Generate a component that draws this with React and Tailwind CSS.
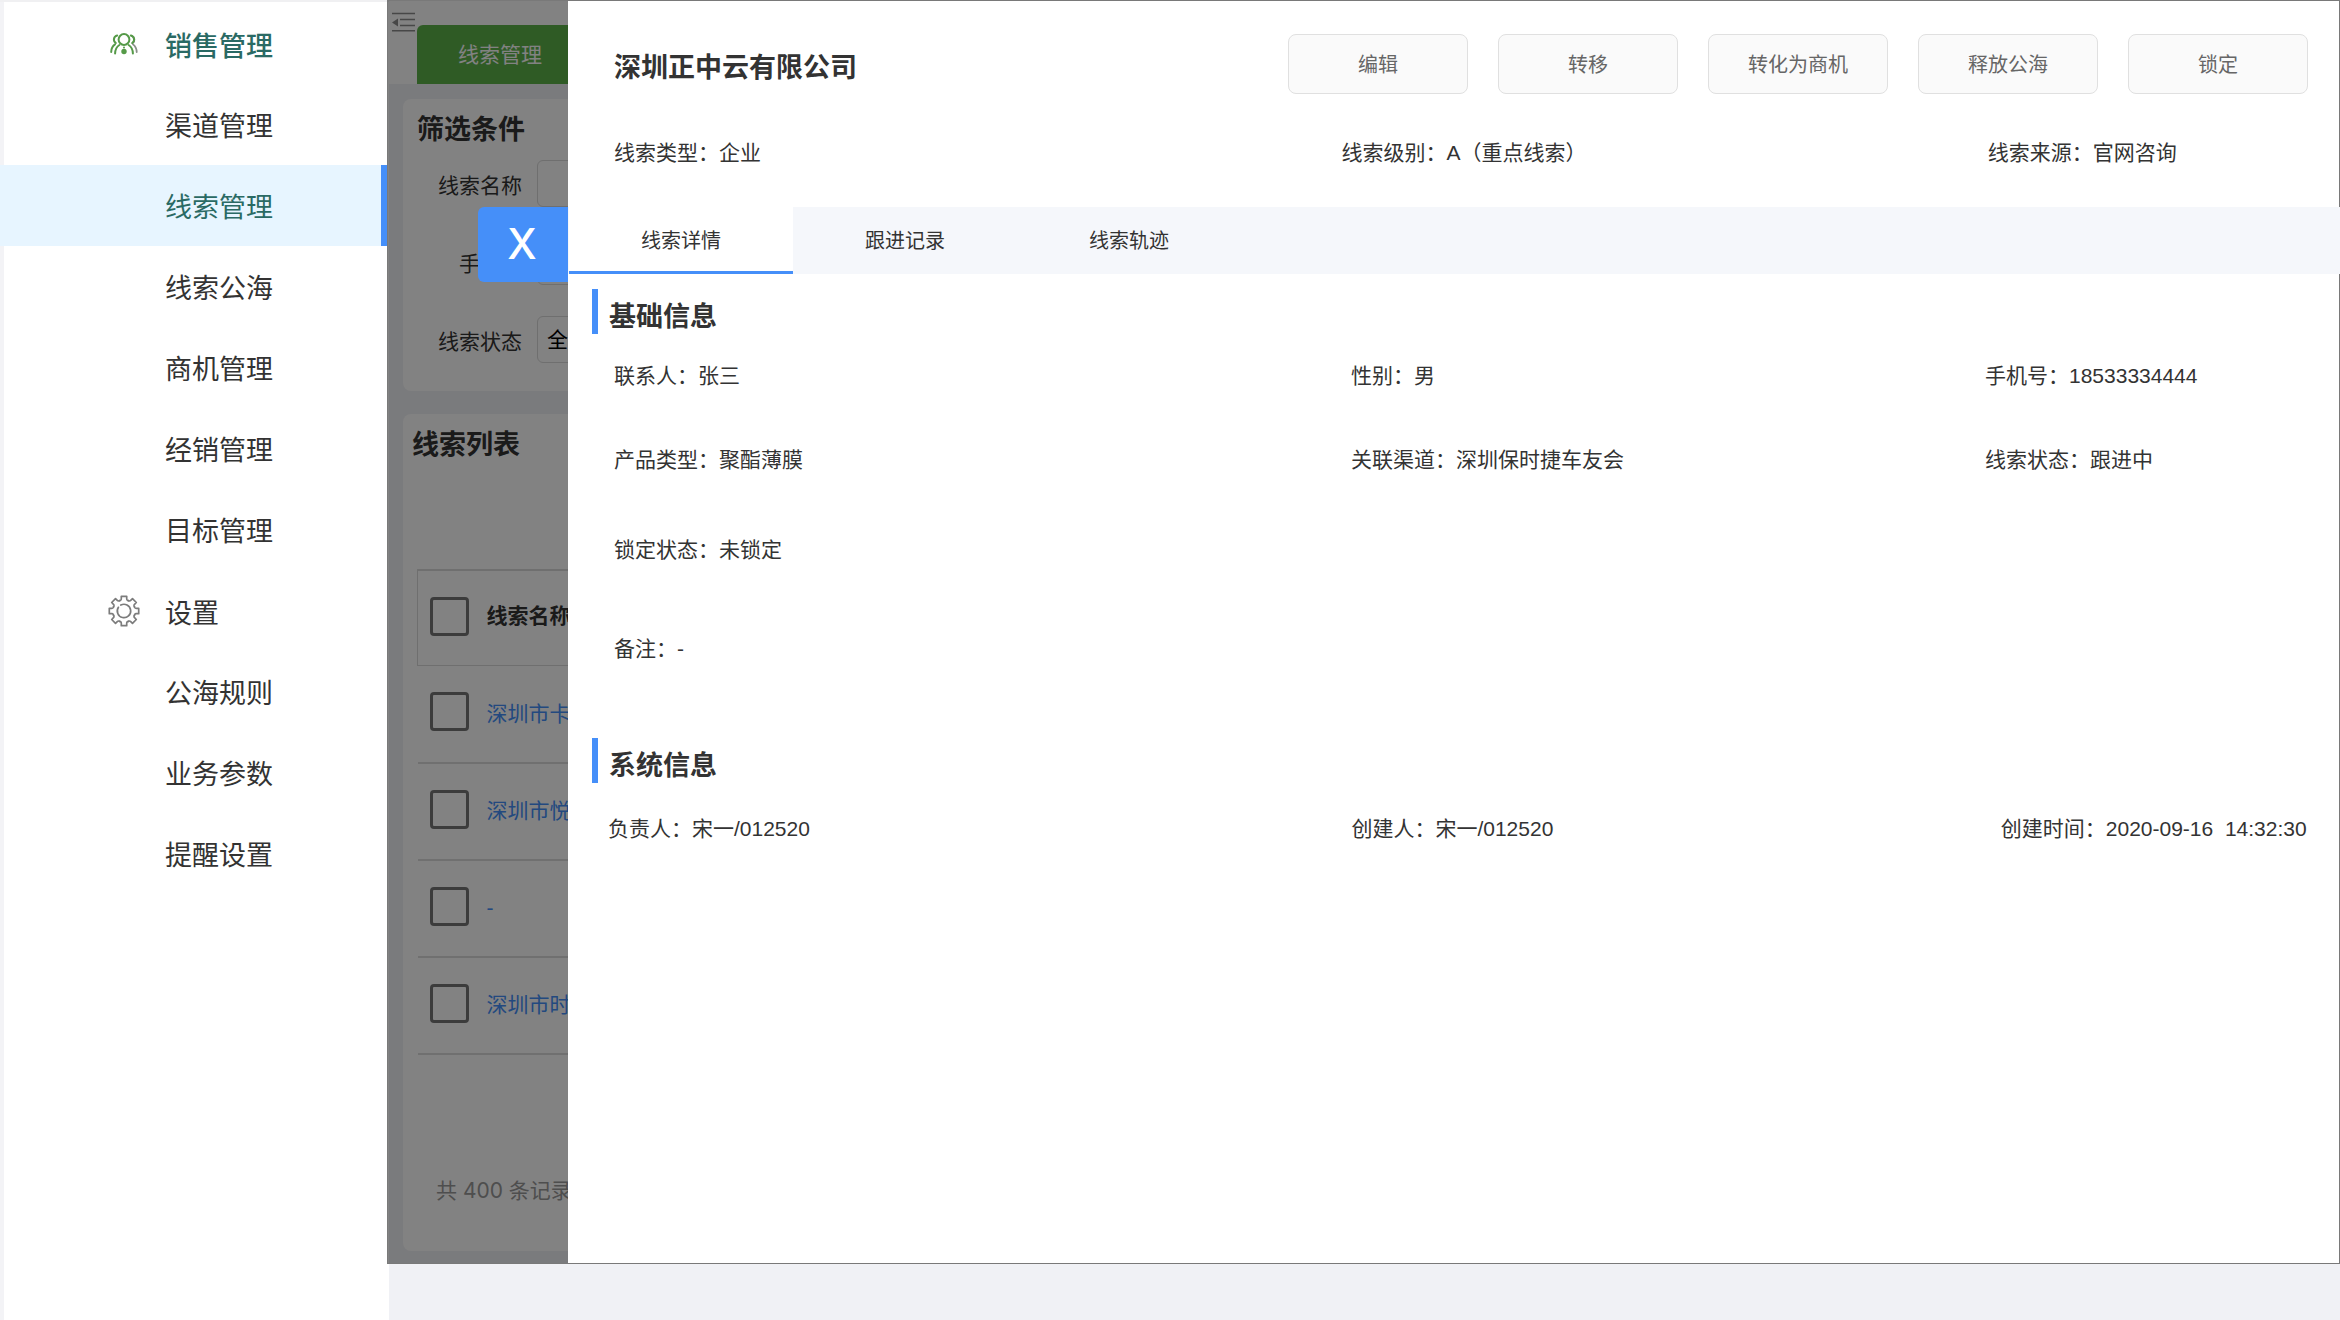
import { useState } from 'react';

const menuGroups = [
  {
    title: '销售管理',
    icon: 'team',
    items: ['渠道管理', '线索管理', '线索公海', '商机管理', '经销管理', '目标管理'],
  },
  {
    title: '设置',
    icon: 'gear',
    items: ['公海规则', '业务参数', '提醒设置'],
  },
];

const actions = ['编辑', '转移', '转化为商机', '释放公海', '锁定'];
const tabs = ['线索详情', '跟进记录', '线索轨迹'];
const leads = ['深圳市卡', '深圳市悦', '-', '深圳市时'];

function TeamIcon() {
  return (
    <svg className="w-7 h-6" viewBox="0 0 28 24" fill="none" strokeLinecap="round">
      <g stroke="#8a8f88" strokeWidth="1.8">
        <path d="M21.600 3.800a4.200 4.200 0 0 1 1 7.400" />
        <path d="M23 12.400c2.400 1.800 3.600 4.400 3.700 7.600" />
      </g>
      <g stroke="#559a48" strokeWidth="2">
        <circle cx="14" cy="7.500" r="5.400" />
        <path d="M7.200 3.400a4.200 4.200 0 0 0-1.400 7.600" />
        <path d="M20.800 3.400a4.200 4.200 0 0 1 1.400 7.600" />
        <path d="M5 12.400C2.500 14 1.300 16.800 1.200 20" />
        <path d="M9.400 13C6.600 14.800 5.200 17.600 5.100 21.500" />
        <path d="M18.600 13c2.800 1.800 4.200 4.600 4.300 8.500" />
      </g>
      <circle cx="14" cy="19.500" r="2.700" fill="#559a48" />
      <circle cx="14" cy="15.600" r="1" fill="#559a48" />
    </svg>
  );
}

function GearIcon() {
  const tooth = 'M11.700 5.600L12.600 5.200Q13.300 4.800 13.300 3.800V1.300H18.700V3.800Q18.700 4.800 19.400 5.200L20.300 5.600';
  return (
    <svg className="w-8 h-8" viewBox="0 0 32 32" fill="none" stroke="#7c7c7c" strokeWidth="1.7" strokeLinecap="round" strokeLinejoin="round">
      {[0, 45, 90, 135, 180, 225, 270, 315].map((deg) => (
        <path key={deg} d={tooth} transform={`rotate(${deg} 16 16)`} />
      ))}
      <path d="M10.400 12.300a6.700 6.700 0 1 0 2.400-2.200" />
    </svg>
  );
}

function CollapseIcon() {
  return (
    <svg className="w-[23px] h-5" viewBox="0 0 23 20" fill="none" stroke="#8c8c8c" strokeWidth="1.500">
      <path d="M0 1.500h23M8 7.500h15M8 13.500h15M0 18.700h23" />
      <path d="M0 10.500l6-4v8z" fill="#8c8c8c" stroke="none" />
    </svg>
  );
}

function Sidebar() {
  return (
    <aside className="w-[389px] pr-[2px] shrink-0 bg-white border-t-2 border-[#f0f0f2]">
      <nav className="border-l-4 border-[#f3f3f6] min-h-full pt-px text-[27px] text-[#333]">
        {menuGroups.map((group) => (
          <div key={group.title}>
            <div className="flex items-center h-[81px] pl-[104px] gap-[25px]">
              <span className="w-8 flex justify-center">
                {group.icon === 'team' ? <TeamIcon /> : <GearIcon />}
              </span>
              <span className={group.icon === 'team' ? 'pt-2 text-[#2a6a64] font-medium' : 'pt-2'}>
                {group.title}
              </span>
            </div>
            <ul>
              {group.items.map((item) => (
                <li key={item}>
                  <a
                    href="#"
                    className={
                      item === '线索管理'
                        ? 'flex items-center h-[81px] pt-[6px] -ml-1 pl-[165px] bg-[#e7f5ff] text-[#2a6a64] border-r-6 border-[#458ff9]'
                        : 'flex items-center h-[81px] pt-[6px] pl-[161px]'
                    }
                  >
                    {item}
                  </a>
                </li>
              ))}
            </ul>
          </div>
        ))}
      </nav>
    </aside>
  );
}

function LeadList() {
  return (
    <div className="text-[21px] text-[#333] pb-[13px]">
      <div className="flex items-end h-[84px] bg-white pl-[3px] gap-[2px]">
        <div className="self-start pt-3">
          <CollapseIcon />
        </div>
        <button className="h-[59px] px-[41px] bg-[#5cb24a] text-white rounded-tl-md rounded-tr-md">
          线索管理
        </button>
      </div>

      {/* Filters */}
      <form className="mt-[15px] ml-[14px] mr-4 h-[292px] bg-white rounded-lg pl-[14px] pt-[11px]">
        <h2 className="text-[27px] leading-10 font-bold mb-[10px]">筛选条件</h2>
        <div className="grid grid-cols-[105px_300px] gap-x-[15px] gap-y-[31px] items-center">
          <label htmlFor="name" className="text-right pt-1">线索名称</label>
          <input id="name" className="h-[47px] border border-[#d9d9d9] rounded-md px-[9px]" />
          <label htmlFor="phone" className="text-right pt-1">手机号</label>
          <input id="phone" className="h-[47px] border border-[#d9d9d9] rounded-md px-[9px]" />
          <label htmlFor="status" className="text-right pt-1">线索状态</label>
          <select id="status" className="h-[47px] border border-[#d9d9d9] rounded-md px-[9px] appearance-none text-black">
            <option>全部</option>
          </select>
        </div>
      </form>

      {/* Lead table */}
      <section className="mt-[23px] ml-[14px] mr-4 h-[837px] bg-white rounded-lg pt-[11px]">
        <h2 className="text-[27px] leading-10 font-bold pl-[9px]">线索列表</h2>
        <div className="mt-[104px] mx-[14px] border-t border-l border-[#d9d9d9] rounded-tl-md h-0" />
        <table className="w-[calc(100%-28px)] mx-[14px] border-collapse">
          <thead>
            <tr className="h-[95px] border border-[#d9d9d9]">
              <th className="w-[69px] pl-3 pb-1">
                <input type="checkbox" aria-label="全选" className="block size-[39px] appearance-none border-3 border-[#777] rounded" />
              </th>
              <th className="text-left font-bold pb-1">线索名称</th>
            </tr>
          </thead>
          <tbody>
            {leads.map((lead) => (
              <tr key={lead} className="h-[97px] border-b-2 border-[#dcdcdc]">
                <td className="pl-3 pb-1">
                  <input type="checkbox" aria-label={lead} className="block size-[39px] appearance-none border-3 border-[#777] rounded" />
                </td>
                <td>
                  <a href="#" className="text-[#458ff9]">{lead}</a>
                </td>
              </tr>
            ))}
          </tbody>
        </table>
        <p className="mt-[120px] pl-[33px] text-[#999] font-['Inter','Noto_Sans_CJK_SC',sans-serif]">
          共 400 条记录
        </p>
      </section>
    </div>
  );
}

function SectionTitle({ children }) {
  return (
    <div className="flex items-start pl-6 gap-[11px]">
      <span className="w-[6px] h-[45px] bg-[#458ff9]" />
      <h3 className="text-[27px] leading-[56px] font-bold">{children}</h3>
    </div>
  );
}

function LeadDrawer({ onClose }) {
  const [tab, setTab] = useState(tabs[0]);

  return (
    <div className="absolute inset-0 bg-black/49 border border-[#797979] pl-[180px]">
      <div className="relative h-full bg-white text-[21px] leading-[30px] text-[#333] whitespace-nowrap">
        <button
          onClick={onClose}
          className="absolute -left-[90px] top-[206px] w-[90px] h-[75px] pr-[2px] pb-[2px] bg-[#458ff9] text-white text-[42px] font-medium font-['Inter',sans-serif] rounded-l-md"
        >
          X
        </button>

        <header className="flex items-center pl-[46px] pr-[31px] pt-[33px]">
          <h1 className="flex-1 pt-2 text-[27px] font-bold">深圳正中云有限公司</h1>
          <div className="flex gap-[30px]">
            {actions.map((action) => (
              <button key={action} className="w-[180px] h-[60px] pt-[2px] bg-[#fafafa] border border-[#e0e0e0] rounded-lg text-xl text-[#666]">
                {action}
              </button>
            ))}
          </div>
        </header>

        <div className="grid grid-cols-[727fr_646fr_351fr] pl-[46px] pt-11">
          <p>线索类型：企业</p>
          <p>线索级别：A（重点线索）</p>
          <p>线索来源：官网咨询</p>
        </div>

        <div role="tablist" className="flex mt-[39px] -mr-px pl-px bg-[#f5f7fb]">
          {tabs.map((name) => (
            <button
              key={name}
              role="tab"
              aria-selected={tab === name}
              onClick={() => setTab(name)}
              className={
                tab === name
                  ? 'w-56 h-[67px] pt-1 text-xl bg-white border-b-3 border-[#458ff9]'
                  : 'w-56 h-[67px] pt-1 text-xl border-b-3 border-transparent'
              }
            >
              {name}
            </button>
          ))}
        </div>

        <section className="pt-[15px]">
          <SectionTitle>基础信息</SectionTitle>
          <div className="grid grid-cols-[737fr_634fr_354fr] grid-rows-[84px_90px_99px_60px] pl-[46px] pt-4">
            <p>联系人：张三</p>
            <p>性别：男</p>
            <p>手机号：18533334444</p>
            <p>产品类型：聚酯薄膜</p>
            <p>关联渠道：深圳保时捷车友会</p>
            <p>线索状态：跟进中</p>
            <p className="col-span-3">锁定状态：未锁定</p>
            <p className="col-span-3">备注：-</p>
          </div>
        </section>

        <section className="pt-11">
          <SectionTitle>系统信息</SectionTitle>
          <div className="grid grid-cols-[743fr_649fr_338fr] pl-10 pt-5">
            <p>负责人：宋一/012520</p>
            <p>创建人：宋一/012520</p>
            <p className="whitespace-pre">创建时间：2020-09-16  14:32:30</p>
          </div>
        </section>
      </div>
    </div>
  );
}

export default function App() {
  const [open, setOpen] = useState(true);

  return (
    <div className="flex min-h-screen bg-[#f0f1f5] font-['Liberation_Sans','Noto_Sans_CJK_SC',sans-serif]">
      <Sidebar />
      <main className="flex-1 min-w-0">
        <div className="relative -ml-[2px] pl-[2px]">
          <LeadList />
          {open && <LeadDrawer onClose={() => setOpen(false)} />}
        </div>
      </main>
    </div>
  );
}
